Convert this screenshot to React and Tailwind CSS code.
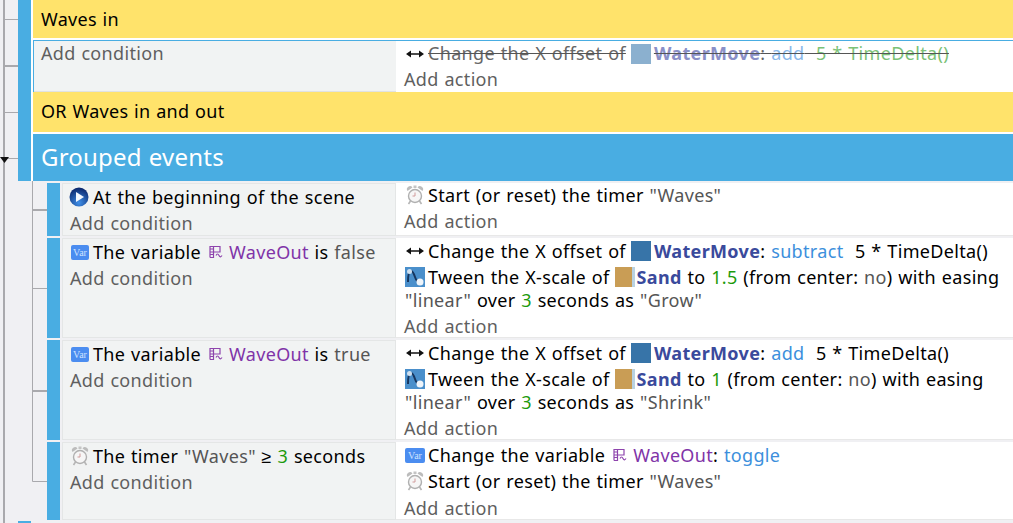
import React from 'react';

const MoveIcon = () => (
  <svg width="20" height="20" viewBox="0 0 20 20" className="shrink-0">
    <path d="M5 10h10" stroke="#111" strokeWidth="1.500" />
    <path d="M1 10l5-3.500v7zM19 10l-5-3.500v7z" fill="#111" />
  </svg>
);

const TimerIcon = () => (
  <svg width="20" height="20" viewBox="0 0 20 20" className="shrink-0">
    <path d="M3.500 19l2-3M16.500 19l-2-3" stroke="#b5b5b5" strokeWidth="1.600" />
    <path d="M2.500 6a3 3 0 0 1 5-3.500zM17.500 6a3 3 0 0 0-5-3.500z" fill="#bcbcbc" />
    <rect x="8.500" y="0.500" width="3" height="2.500" fill="#c4c4c4" />
    <circle cx="10" cy="11" r="6.500" fill="#f6f6f6" stroke="#b0b0b0" strokeWidth="1.400" />
    <path d="M10 7.500V11H7.500" stroke="#d09a9a" strokeWidth="1" fill="none" />
  </svg>
);

const PlayIcon = () => (
  <svg width="20" height="20" viewBox="0 0 20 20" className="shrink-0 -ml-px">
    <defs>
      <radialGradient id="playFill" cx="50%" cy="80%" r="75%">
        <stop offset="0%" stopColor="#3f8fe8" />
        <stop offset="100%" stopColor="#0c2a70" />
      </radialGradient>
    </defs>
    <circle cx="10" cy="10" r="9.500" fill="url(#playFill)" />
    <path d="M7 5l8 5-8 5z" fill="#f4f8ff" />
  </svg>
);

const VarIcon = ({ wide }) => (
  <span className={`h-[15px] shrink-0 rounded-[2px] bg-[#4b8df0] text-[#cfe2ff] text-[10px] leading-[15px] tracking-normal text-center font-['Liberation_Serif',serif] ${wide ? 'w-5' : 'w-[18px] ml-px'}`}>
    Var
  </span>
);

const TweenIcon = () => (
  <svg width="20" height="20" viewBox="0 0 20 20" className="shrink-0">
    <rect width="20" height="20" fill="#4a8fcb" />
    <path d="M3 15C3 7 4 4 6 4s3 3 4 6 2 5 5 5" stroke="#17365f" strokeWidth="2" fill="none" />
    <circle cx="4.500" cy="4.500" r="2.500" fill="#cfe0f0" />
    <circle cx="15" cy="15" r="3.500" fill="#eef4fa" />
  </svg>
);

const WaterSprite = ({ faded }) => (
  <span className={`w-5 h-5 shrink-0 ml-[5px] mr-[3px] ${faded ? 'bg-[#8bb0cf]' : 'bg-[#3774a8]'}`} />
);

const SandSprite = () => (
  <span className="w-5 h-5 shrink-0 ml-[5px] mr-[2px] flex">
    <span className="w-[17px] bg-[#c99d55]" />
    <span className="w-[3px] bg-[#b9d2e2]" />
  </span>
);

const VariableIcon = () => (
  <svg width="14" height="14" viewBox="0 0 14 14" className="shrink-0 ml-2 mr-[6px]">
    <path d="M1 12.500V1.500h10v5.500H1M1 9.500h3.500M1 4h3.500M4.500 1.500v11H1M7 10.500c1-2 2-2 3 0s2 1.500 3 0" stroke="#8e44ad" strokeWidth="1.200" fill="none" />
  </svg>
);

const Gray = ({ children }) => <span className="text-[#555]">{children}</span>;
const Num = ({ children }) => <span className="text-[#1d9a0c]">{children}</span>;
const Obj = ({ children }) => <span className="font-bold text-[#3a4a9c]">{children}</span>;
const Op = ({ children }) => <span className="text-[#3c8fdc]">{children}</span>;
const Var = ({ children }) => <span className="text-[#8034a8]">{children}</span>;

const Line = ({ icon, children }) => (
  <div className="flex items-center h-[26px]">
    <span className="w-[23px] shrink-0 flex items-center">{icon}</span>
    <span className="whitespace-pre flex items-center">{children}</span>
  </div>
);

const Wrapped = ({ children }) => (
  <div className="h-[23px] leading-[23px] -mt-px whitespace-pre">{children}</div>
);

const Row = ({ height, conditions, actions, tight }) => (
  <div className="flex" style={{ height }}>
    <div className="w-[13px] bg-[#49ade2] mr-[2px] shrink-0" />
    <div className="w-[334px] shrink-0 bg-[#f1f3f3] border border-[#e4e6e6] px-[7px]">
      {conditions}
      <div className="h-[26px] leading-[26px] text-[#5f5f5f]">Add condition</div>
    </div>
    <div className="flex-1 bg-white border-b border-[#e8e8e8] pl-[9px]">
      <div className={tight ? '-mt-px' : ''}>
        {actions}
        <div className={`h-[26px] leading-[26px] text-[#5f5f5f] -ml-px ${tight ? '' : 'mt-px'}`}>Add action</div>
      </div>
    </div>
  </div>
);

const Gutter = () => (
  <svg width="18" height="523" className="shrink-0">
    <path d="M4 0v523" stroke="#a9a9ad" strokeWidth="2" />
    <path d="M4 19.500h14M4 112.500h14M4 158.500h14" stroke="#a9a9ad" strokeWidth="1" />
    <path d="M4 66h14" stroke="#a9a9ad" strokeWidth="2" />
    <path d="M0 157h9l-4.500 6z" fill="#111" />
  </svg>
);

const SubGutter = () => (
  <svg width="29" height="339" className="shrink-0 -mt-[2px]">
    <path d="M14.500 0v300.500h14.500" stroke="#a9a9ad" strokeWidth="1" fill="none" />
    <path d="M14 29h15" stroke="#a9a9ad" strokeWidth="2" />
    <path d="M14 107.500h15" stroke="#a9a9ad" strokeWidth="1" />
    <path d="M14 210h15" stroke="#a9a9ad" strokeWidth="2" />
  </svg>
);

const App = () => (
  <div className="flex w-[1013px] h-[523px] overflow-hidden bg-[#f0f0f3] text-[18px] tracking-[0.34px] [word-spacing:0.7px] text-black font-['Noto_Sans','Liberation_Sans',sans-serif]">
    <Gutter />
    <div className="flex-1 flex flex-col min-w-0">
      {/* Waves in */}
      <div className="flex h-[40px] bg-white shrink-0">
        <div className="w-[13px] bg-[#49ade2] mr-[2px]" />
        <div className="flex-1 bg-[#ffe36b] pl-2 leading-[38px] h-[38px] tracking-[0.28px]">Waves in</div>
      </div>
      <div className="flex h-[52px] bg-white shrink-0">
        <div className="w-[13px] bg-[#49ade2] mr-[2px]" />
        <div className="flex-1 flex border-t border-l border-[#49ade2]">
          <div className="w-[362px] shrink-0 bg-[#f1f3f3] border-b border-[#e0e2e2] pl-[7px] text-[#5f5f5f] leading-[24px]">
            Add condition
          </div>
          <div className="flex-1 bg-white pl-[9px]">
            <div className="flex items-center h-[25px]">
              <span className="w-[23px] shrink-0 flex items-center"><MoveIcon /></span>
              <span className="whitespace-pre flex items-center line-through decoration-[#555]">
                <span className="text-[#666]">Change the X offset of</span>
                <WaterSprite faded />
                <span className="font-bold text-[#8a90c8]">WaterMove</span>
                <span className="text-[#666]">: </span>
                <span className="text-[#8ab8ea]">add</span>
                <span className="text-[#7bc277]">  5 * TimeDelta()</span>
              </span>
            </div>
            <div className="h-[26px] leading-[26px] text-[#5f5f5f] -ml-px">Add action</div>
          </div>
        </div>
      </div>
      {/* OR Waves */}
      <div className="flex h-[42px] bg-white shrink-0">
        <div className="w-[13px] bg-[#49ade2] mr-[2px]" />
        <div className="flex-1 bg-[#ffe36b] pl-2 leading-[38px] h-[40px] tracking-[0.3px]">OR Waves in and out</div>
      </div>
      {/* Grouped */}
      <div className="flex h-[47px] bg-white shrink-0">
        <div className="w-[13px] bg-[#49ade2] mr-[2px]" />
        <div className="flex-1 bg-[#49ade2] pl-2 text-white text-[24px] tracking-[0.2px] leading-[45px] h-[47px]">Grouped events</div>
      </div>
      {/* Sub events */}
      <div className="flex mt-[2px] shrink-0">
        <SubGutter />
        <div className="flex-1 flex flex-col gap-[2px] min-w-0">
          <Row
            height={53}
            tight
            conditions={<Line icon={<PlayIcon />}>At the beginning of the scene</Line>}
            actions={<Line icon={<TimerIcon />}>Start (or reset) the timer <Gray>"Waves"</Gray></Line>}
          />
          <Row
            height={100}
            conditions={<Line icon={<VarIcon />}>The variable<VariableIcon /><Var>WaveOut</Var> is <Gray>false</Gray></Line>}
            actions={
              <>
                <Line icon={<MoveIcon />}>Change the X offset of<WaterSprite /><Obj>WaterMove</Obj>: <Op>subtract</Op>  5 * TimeDelta()</Line>
                <Line icon={<TweenIcon />}>Tween the X-scale of<SandSprite /><Obj>Sand</Obj> to <Num>1.5</Num> (from center: <Gray>no</Gray>) with easing</Line>
                <Wrapped><Gray>"linear"</Gray> over <Num>3</Num> seconds as <Gray>"Grow"</Gray></Wrapped>
              </>
            }
          />
          <Row
            height={100}
            conditions={<Line icon={<VarIcon />}>The variable<VariableIcon /><Var>WaveOut</Var> is <Gray>true</Gray></Line>}
            actions={
              <>
                <Line icon={<MoveIcon />}>Change the X offset of<WaterSprite /><Obj>WaterMove</Obj>: <Op>add</Op>  5 * TimeDelta()</Line>
                <Line icon={<TweenIcon />}>Tween the X-scale of<SandSprite /><Obj>Sand</Obj> to <Num>1</Num> (from center: <Gray>no</Gray>) with easing</Line>
                <Wrapped><Gray>"linear"</Gray> over <Num>3</Num> seconds as <Gray>"Shrink"</Gray></Wrapped>
              </>
            }
          />
          <Row
            height={78}
            conditions={<Line icon={<TimerIcon />}>The timer <Gray>"Waves"</Gray> ≥ <Num>3</Num> seconds</Line>}
            actions={
              <>
                <Line icon={<VarIcon wide />}>Change the variable<VariableIcon /><Var>WaveOut</Var>: <Op>toggle</Op></Line>
                <Line icon={<TimerIcon />}>Start (or reset) the timer <Gray>"Waves"</Gray></Line>
              </>
            }
          />
        </div>
      </div>
      <div className="flex h-[3px] mt-px shrink-0">
        <div className="w-[13px] bg-[#49ade2]" />
      </div>
    </div>
  </div>
);

export default App;
